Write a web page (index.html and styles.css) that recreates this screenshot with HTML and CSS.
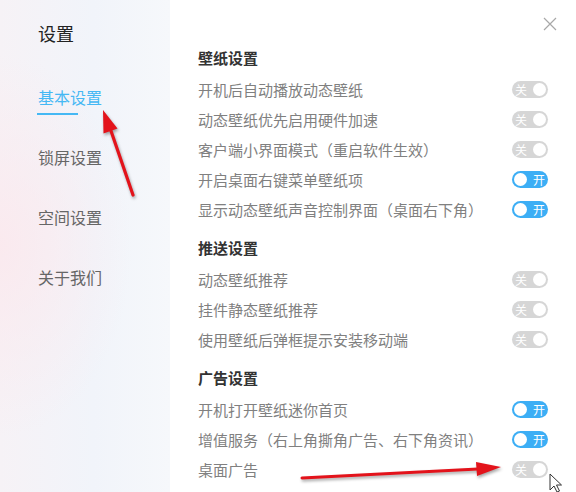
FILE: index.html
```html
<!DOCTYPE html>
<html lang="zh-CN">
<head>
    <meta charset="UTF-8">
    <meta name="viewport" content="width=device-width, initial-scale=1.0">
    <title>设置</title>
    <link rel="stylesheet" href="styles.css">
</head>
<body>
    <div class="window">
        <aside class="sidebar">
            <h1 class="title">设置</h1>
            <nav class="nav">
                <div class="nav-item active">基本设置</div>
                <div class="nav-item">锁屏设置</div>
                <div class="nav-item">空间设置</div>
                <div class="nav-item">关于我们</div>
            </nav>
        </aside>

        <main class="content">
            <button class="close-btn" title="关闭">
                <svg width="14" height="14" viewBox="0 0 14 14">
                    <path d="M1 1 L13 13 M13 1 L1 13" stroke="#a8a8a8" stroke-width="1.2" fill="none"/>
                </svg>
            </button>

            <section class="group">
                <h2 class="group-title">壁纸设置</h2>
                <div class="row"><span>开机后自动播放动态壁纸</span><span class="toggle off"><em>关</em><i></i></span></div>
                <div class="row"><span>动态壁纸优先启用硬件加速</span><span class="toggle off"><em>关</em><i></i></span></div>
                <div class="row"><span>客户端小界面模式（重启软件生效）</span><span class="toggle off"><em>关</em><i></i></span></div>
                <div class="row"><span>开启桌面右键菜单壁纸项</span><span class="toggle on"><i></i><em>开</em></span></div>
                <div class="row"><span>显示动态壁纸声音控制界面（桌面右下角）</span><span class="toggle on"><i></i><em>开</em></span></div>
            </section>

            <section class="group">
                <h2 class="group-title">推送设置</h2>
                <div class="row"><span>动态壁纸推荐</span><span class="toggle off"><em>关</em><i></i></span></div>
                <div class="row"><span>挂件静态壁纸推荐</span><span class="toggle off"><em>关</em><i></i></span></div>
                <div class="row"><span>使用壁纸后弹框提示安装移动端</span><span class="toggle off"><em>关</em><i></i></span></div>
            </section>

            <section class="group">
                <h2 class="group-title">广告设置</h2>
                <div class="row"><span>开机打开壁纸迷你首页</span><span class="toggle on"><i></i><em>开</em></span></div>
                <div class="row"><span>增值服务（右上角撕角广告、右下角资讯）</span><span class="toggle on"><i></i><em>开</em></span></div>
                <div class="row"><span>桌面广告</span><span class="toggle off"><em>关</em><i></i></span></div>
            </section>
        </main>

        <!-- red annotation arrows + mouse cursor drawn over the window -->
        <svg class="marks" width="576" height="492" viewBox="0 0 576 492">
            <g class="arrow">
                <path d="M133 195 L110 128" stroke="#e3131b" stroke-width="3.2" stroke-linecap="round" fill="none"/>
                <polygon points="103,110 117.5,128.5 103.5,133.5" fill="#e3131b"/>
            </g>
            <g class="arrow">
                <path d="M302 478 L478 469" stroke="#e3131b" stroke-width="3" stroke-linecap="round" fill="none"/>
                <polygon points="501,467 476,462 477,476" fill="#e3131b"/>
            </g>
            <path d="M550 474 L550 490 L554 486 L557 492 L559.5 491 L556.5 485 L561.5 485 Z" fill="#fff" stroke="#333" stroke-width="1" stroke-linejoin="round"/>
        </svg>
    </div>
</body>
</html>
```

FILE: styles.css
```css
* {
    box-sizing: border-box;
}
body {
    margin: 0;
    font-family: "Noto Sans CJK SC", "Noto Sans", sans-serif;
    background: #fff;
}
.window {
    position: relative;
    width: 576px;
    height: 492px;
    display: flex;
    overflow: hidden;
    background: #fff;
}

/* left menu */
.sidebar {
    width: 170px;
    flex-shrink: 0;
    padding-left: 38px;
    background:
        radial-gradient(ellipse at 0% 50%, rgba(251, 232, 237, 0.85) 0, rgba(251, 232, 237, 0) 55%),
        linear-gradient(90deg, #f6f2f6 0%, #f1f4fa 55%, #f6f8fb 100%);
}
.title {
    margin: 0;
    padding-top: 21px;
    font-size: 18px;
    font-weight: normal;
    line-height: 24px;
    color: #222;
}
.nav {
    margin-top: 22px;
}
.nav-item {
    position: relative;
    height: 60px;
    line-height: 60px;
    font-size: 16px;
    color: #666;
}
.nav-item.active {
    color: #45b8f4;
}
.nav-item.active::after {
    content: "";
    position: absolute;
    left: -1px;
    top: 46px;
    width: 41px;
    height: 2px;
    background: #45b8f4;
}

/* right panel */
.content {
    position: relative;
    flex: 1;
    padding: 43px 28px 0 28px;
}
.close-btn {
    position: absolute;
    top: 17px;
    right: 19px;
    width: 14px;
    height: 14px;
    padding: 0;
    border: none;
    background: none;
}
.close-btn svg {
    display: block;
}
.group + .group {
    margin-top: 9px;
}
.group-title {
    margin: 0;
    height: 31px;
    line-height: 30px;
    font-size: 15px;
    font-weight: bold;
    color: #333;
}
.row {
    height: 30px;
    display: flex;
    align-items: center;
    justify-content: space-between;
    font-size: 15px;
    color: #808080;
}

.toggle {
    width: 36px;
    height: 17px;
    border-radius: 9px;
    display: flex;
    align-items: center;
    justify-content: space-between;
    padding: 0 2px 0 3px;
}
.toggle.off {
    background: #d6d6d6;
}
.toggle.on {
    background: #3caef5;
    padding: 0 3px 0 2px;
}
.toggle em {
    font-style: normal;
    font-size: 12px;
    line-height: 17px;
    color: #fff;
}
.toggle i {
    width: 13px;
    height: 13px;
    border-radius: 50%;
    background: #fff;
}

.marks {
    position: absolute;
    left: 0;
    top: 0;
    pointer-events: none;
}
.arrow {
    filter: drop-shadow(1px 2px 1.5px rgba(0, 0, 0, 0.35));
}
```
